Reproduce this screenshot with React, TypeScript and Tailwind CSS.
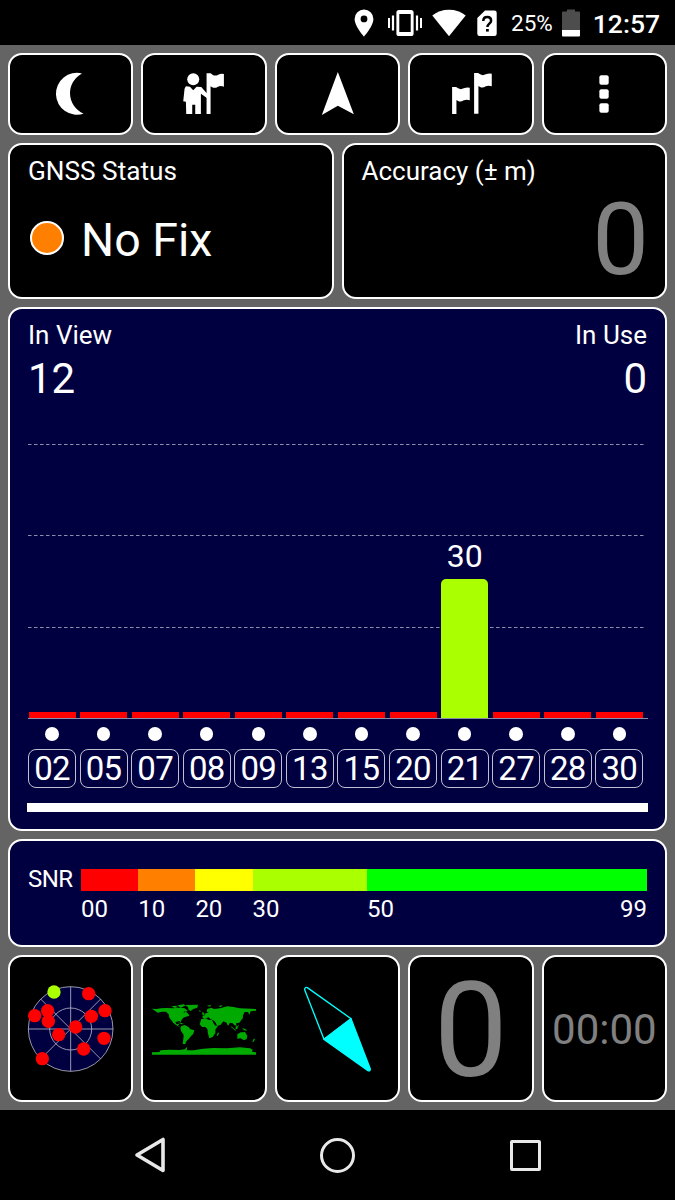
import type { ReactNode } from "react";
import { clsx } from "clsx";

const satellites = [
  { prn: "02", snr: 0 },
  { prn: "05", snr: 0 },
  { prn: "07", snr: 0 },
  { prn: "08", snr: 0 },
  { prn: "09", snr: 0 },
  { prn: "13", snr: 0 },
  { prn: "15", snr: 0 },
  { prn: "20", snr: 0 },
  { prn: "21", snr: 30 },
  { prn: "27", snr: 0 },
  { prn: "28", snr: 0 },
  { prn: "30", snr: 0 },
];

const snrScale = [
  { label: "00", className: "w-[57.2px] bg-[#ff0000]" },
  { label: "10", className: "w-[57.2px] bg-[#ff8000]" },
  { label: "20", className: "w-[57.2px] bg-[#ffff00]" },
  { label: "30", className: "w-[114.4px] bg-[#aaff00]" },
  { label: "50", className: "flex-1 bg-[#00ff00]" },
];

// positions of the satellites on the small sky plot
const skyDots = [
  [266, 145],
  [104, 211],
  [143, 196],
  [145, 228],
  [315, 196],
  [274, 213],
  [227, 245],
  [176, 268],
  [312, 279],
  [251, 311],
  [127, 340],
];

type CardProps = {
  className?: string;
  children: ReactNode;
};

function Card({ className, children }: CardProps) {
  return (
    <div className={clsx("rounded-[14px] border-2 border-white", className)}>
      {children}
    </div>
  );
}

function ToolButton({ viewBox, children }: { viewBox: string; children: ReactNode }) {
  return (
    <button type="button" className="flex flex-1 items-center justify-center rounded-[14px] border-2 border-white bg-black">
      <svg viewBox={viewBox} className="h-[60px] w-[60px] fill-white">
        {children}
      </svg>
    </button>
  );
}

function StatusBar() {
  return (
    <header className="flex h-[45px] items-center bg-black pr-[15px]">
      <svg viewBox="0 0 20 28" className="ml-auto h-7 w-5 fill-white">
        <path
          fillRule="evenodd"
          d="M10 .5A9.4 9.4 0 0 0 .6 9.9C.6 17 10 27.5 10 27.5S19.4 17 19.4 9.9A9.4 9.4 0 0 0 10 .5zm0 6a3.4 3.4 0 1 1 0 6.8 3.4 3.4 0 0 1 0-6.8z"
        />
      </svg>
      <svg viewBox="0 0 34 28" className="ml-[14px] h-7 w-[34px] fill-white">
        <path
          fillRule="evenodd"
          d="M11 1h12a2.6 2.6 0 0 1 2.6 2.6v20.8A2.6 2.6 0 0 1 23 27H11a2.6 2.6 0 0 1-2.6-2.6V3.6A2.6 2.6 0 0 1 11 1zm.3 4v18h11.4V5z"
        />
        <path d="M0 9h2v10H0zM3.900 6.500h2.200v15H3.900zM27.900 6.500h2.200v15h-2.200zM32 9h2v10h-2z" />
      </svg>
      <svg viewBox="0 0 34 28" className="ml-[10px] h-7 w-[34px] fill-white">
        <path d="M17 27.3L.3 6.500C5 2.800 10.500.8 17 .8s12 2 16.700 5.700z" />
      </svg>
      <svg viewBox="0 0 20 28" className="ml-[11px] h-7 w-5 fill-white">
        <path d="M8 1.500h9.500A2.200 2.200 0 0 1 19.700 3.700v21a2.200 2.200 0 0 1-2.200 2.200h-15A2.200 2.200 0 0 1 .3 24.700V9z" />
        <path d="M6.300 12c0-2.600 1.700-4.100 3.900-4.100s3.900 1.500 3.900 3.800c0 2.800-3.700 3.200-3.700 6.300" fill="none" stroke="#000" strokeWidth="2.500" />
        <path d="M9 20h2.800v2.600H9z" fill="#000" />
      </svg>
      <span className="ml-[14px] w-[43px] pt-[2px] text-[22.500px] leading-[45px] whitespace-nowrap text-white">25%</span>
      <svg viewBox="0 0 18 28" className="ml-[8px] h-7 w-[18px]">
        <path d="M5 .5h8v2h4a1 1 0 0 1 1 1V21H0V3.500a1 1 0 0 1 1-1h4z" fill="#4d4d4d" />
        <path d="M0 21h18v5.500a1 1 0 0 1-1 1H1a1 1 0 0 1-1-1z" fill="#fff" />
      </svg>
      <span className="ml-[12px] w-[68px] pt-px text-right text-[26.500px] leading-[45px] font-medium text-white">12:57</span>
    </header>
  );
}

function Toolbar() {
  return (
    <div className="flex h-[82px] gap-2">
      <ToolButton viewBox="40.700 64 60 60">
        <path d="M81.700 73.400A21 21 0 1 0 83.300 113.700A22.300 22.300 0 0 1 81.700 73.400Z" />
      </ToolButton>
      <ToolButton viewBox="522.300 72 180 180">
        <circle cx="580" cy="118" r="18" />
        <path d="M558 139l12 1 10 11 10-11 14 1 18 20v14l-19-14v61h-17v-28h-9v28h-18l-1-37-8-1 4-38z" />
        <path d="M620 100h12l6 4q8 5 17 0 8-4 17-2v38q-10-4-18 0-9 6-17 2l-5-3v83h-12z" />
      </ToolButton>
      <ToolButton viewBox="922.500 72 180 180">
        <path d="M1012 96L1060 223L1012 197L964 225Z" />
      </ToolButton>
      <ToolButton viewBox="317.700 72 180 180">
        <path d="M351 141h12l6 4q8 5 17 0 9-4 18-2v38q-10-4-18 0-9 6-17 2l-5-3v42h-13z" />
        <path d="M417 99h12l6 4q8 5 17 0 9-4 18-2v38q-10-4-18 0-9 6-17 2l-5-3v83h-13z" />
      </ToolButton>
      <ToolButton viewBox="717.900 72 180 180">
        <rect x="794" y="106" width="28" height="28" rx="6" />
        <rect x="794" y="148" width="28" height="28" rx="6" />
        <rect x="794" y="190" width="28" height="28" rx="6" />
      </ToolButton>
    </div>
  );
}

function StatusCards() {
  return (
    <div className="flex h-[156px] gap-2 text-white">
      <Card className="flex-1 bg-black px-[18px] pt-[10px]">
        <div className="text-[26.200px] leading-[32px]">GNSS Status</div>
        <div className="mt-[26px] flex items-start">
          <span className="ml-[2px] mt-[8px] h-[34px] w-[34px] rounded-full border-2 border-white bg-[#ff8000]" />
          <span className="ml-[17px] text-[46.500px] leading-[54px]">No Fix</span>
        </div>
      </Card>
      <Card className="flex-1 bg-black px-[18px] pt-[10px]">
        <div className="text-[26px] leading-[32px]">Accuracy (± m)</div>
        <div className="mt-[3px] -mr-[2px] text-right text-[101px] leading-[100px] text-[#808080]">0</div>
      </Card>
    </div>
  );
}

function GridLine() {
  return (
    <svg className="block h-px w-[617px]" viewBox="0 0 617 1">
      <line x1="0" x2="617" y1=".5" y2=".5" stroke="#8c8cac" strokeDasharray="3.500 2.500" />
    </svg>
  );
}

function SignalChart() {
  return (
    <Card className="h-[524px] bg-[#000040] px-[18px] pt-[9px] text-white">
      <div className="flex justify-between text-[26px] leading-[34px]">
        <span>In View</span>
        <span>In Use</span>
      </div>
      <div className="mt-px flex justify-between text-[42px] leading-[52px]">
        <span>12</span>
        <span>0</span>
      </div>

      <div className="relative mt-[39px] flex h-[275px] w-[620px] flex-col justify-between">
        <GridLine />
        <GridLine />
        <GridLine />
        <div className="h-px bg-[#8c8cac]" />
        <div className="absolute inset-0 flex w-[615.500px] items-end justify-between pb-px">
          {satellites.map(({ prn, snr }) => (
            <div key={prn} className="flex w-12 flex-col items-center">
              {snr > 0 && <span className="mb-[5px] text-[32px] leading-[36px]">{snr}</span>}
              <div
                className={clsx("w-[47px]", snr > 0 ? "rounded-t-[5px] bg-[#aaff00]" : "bg-[#ff0000]")}
                style={{ height: snr > 0 ? snr * 4.65 : 6 }}
              />
            </div>
          ))}
        </div>
      </div>

      <div className="mt-[8px] flex w-[615.500px] justify-between">
        {satellites.map(({ prn }) => (
          <div key={prn} className="flex w-12 flex-col items-center">
            <span className="h-[13.500px] w-[13.500px] rounded-full bg-white" />
            <span className="mt-[8.500px] h-[38.500px] w-12 rounded-[8px] border border-[#c0c0d0] text-center text-[33px] leading-[37px] tracking-[-0.700px]">
              {prn}
            </span>
          </div>
        ))}
      </div>
      <div className="mt-[15px] -ml-px h-[9px] w-[621px] bg-white" />
    </Card>
  );
}

function SnrLegend() {
  return (
    <Card className="flex h-[108px] bg-[#000040] px-[18px] pt-[28px] text-[24px] leading-[22px] text-white">
      <span className="w-[53px] shrink-0 leading-[20px] tracking-[-0.500px]">SNR</span>
      <div className="relative flex flex-1">
        {snrScale.map(({ label, className }) => (
          <div key={label} className={clsx("h-[22px]", className)}>
            <div className="pt-[29px]">{label}</div>
          </div>
        ))}
        <span className="absolute top-[29px] right-0">99</span>
      </div>
    </Card>
  );
}

function SkyPlot() {
  return (
    <svg viewBox="63 101 300 300" className="h-[100px] w-[100px]">
      <g fill="none" stroke="#b4b4c8" strokeWidth="2.500">
        <circle cx="212" cy="251" r="127" fill="#000040" />
        <circle cx="212" cy="251" r="63" />
        <path d="M85 251h254M212 124v254M122 161l180 180M302 161L122 341" />
      </g>
      {skyDots.map(([x, y]) => (
        <circle key={`${x}-${y}`} cx={x} cy={y} r="20" fill="#ff0000" />
      ))}
      <circle cx="162" cy="140" r="20" fill="#aaff00" />
    </svg>
  );
}

function WorldMap() {
  return (
    <svg viewBox="36 43 312 152" className="mt-[2px] h-[50.700px] w-[104px]" fill="#00aa00">
      {/* Americas */}
      <path d="M36 57l14 1 12-2 18-1 20 1 12-2 18 1 6 7-6 8 8-4 8 8 2 4-12 4-6 2-6 8-2 6-4-4-8 2-4 2 4 6 8-2-4 6 10 6-4-1-12-7-8-6-6-8-6-8-2-10-8-8-12 0-13 3z" />
      <path d="M94 50l12-2 8 4-10 3zM112 47l20-3 4 4-14 6zM118 54l16 2 10 8-8 2z" />
      <path d="M134 46l40-1-2 9-12 4-8 6-6-4-2-8z" />
      <path d="M112 98l12 2 8 3-8 1zM124 109l10-3 12 6 4 6 13 4-3 10-6 6-8 10-8 8-2 8-8-2 2-14 1-12-8-12-2-8z" />
      {/* Africa and Eurasia */}
      <path d="M184 88l14-2 6 4 12 1 4 9 6 8 8 0-8 12 0 10-8 12-10 4-4-14-2-14-6-6-10 0-7-8z" />
      <path d="M188 84v-6l8-2-2-4 12-4-6-2 2-8 12-4 8 4 18-2 22-6 18 2 20 4 52 2-2 5-18 2-4 10-4-8-10 0-4 8-4 8-2 8-6 8-10 2 2 8-6-2-6-6-8-2-6 10-4-10-10-4-8 10-10 4-8-14-14-8-4-4-12 4z" />
      <path d="M187 66l5 4 2 5-7 1zM176 62l7 1-3 4zM200 48l14-2-4 5zM236 49l12-3-6 7z" />
      <path d="M234 128l3 3-4 8-3-1zM305 76l4 2-1 9-6 3z" />
      {/* Oceania */}
      <path d="M274 109l8 8 6 4-2 2-12-10zM288 110l6-1-2 10-6-2zM306 115l10 3 6 5-10-1zM294 104l4 8-4-4z" />
      <path d="M292 134l10-6 8 0 4-2 8 12-2 10-8 4-10-6-10 1zM342 146l3 4-6 8-2-2z" />
      {/* Antarctica */}
      <path d="M36 188L58 187L62 182L88 180L120 181L134 179L142 171L140 182L160 182L190 177L220 175L260 176L300 173L330 176L338 180L336 186L348 188V195H36Z" />
    </svg>
  );
}

function Compass() {
  return (
    <svg viewBox="54 101 300 300" className="h-[100px] w-[100px]" stroke="#00ffff" strokeWidth="4" strokeLinejoin="round">
      <path d="M243 220L112 127Q104 124 104 133L162 282Z" fill="none" />
      <path d="M243 220L301 371Q301 378 294 376L162 282Z" fill="#00ffff" />
    </svg>
  );
}

function BottomTiles() {
  const tile = "flex flex-1 items-center justify-center bg-black";

  return (
    <div className="flex h-[147px] gap-2 text-[#808080]">
      <Card className={tile}>
        <SkyPlot />
      </Card>
      <Card className={tile}>
        <WorldMap />
      </Card>
      <Card className={tile}>
        <Compass />
      </Card>
      <Card className={tile}>
        <span className="pt-[5px] text-[132px] leading-none">0</span>
      </Card>
      <Card className={tile}>
        <span className="pt-[3px] text-[42px] leading-none">00:00</span>
      </Card>
    </div>
  );
}

function NavBar() {
  return (
    <nav className="flex h-[90px] items-center justify-center bg-black">
      <div className="flex w-[187.500px] justify-center">
        <svg viewBox="0 0 36 36" className="h-9 w-9" fill="none" stroke="#e8e8e8" strokeWidth="3.600" strokeLinejoin="round">
          <path d="M31 2.500v31L5 18z" />
        </svg>
      </div>
      <div className="flex w-[187.500px] justify-center">
        <span className="h-[35px] w-[35px] rounded-full border-[3.500px] border-[#e8e8e8]" />
      </div>
      <div className="flex w-[187.500px] justify-center">
        <span className="h-[31px] w-[31px] rounded-[2px] border-[3.500px] border-[#e8e8e8]" />
      </div>
    </nav>
  );
}

export default function App() {
  return (
    <div className="h-[1200px] w-[675px] overflow-hidden bg-[#646464] font-[Roboto,sans-serif]">
      <StatusBar />
      <main className="flex h-[1065px] flex-col gap-2 px-2 pt-2">
        <Toolbar />
        <StatusCards />
        <SignalChart />
        <SnrLegend />
        <BottomTiles />
      </main>
      <NavBar />
    </div>
  );
}
